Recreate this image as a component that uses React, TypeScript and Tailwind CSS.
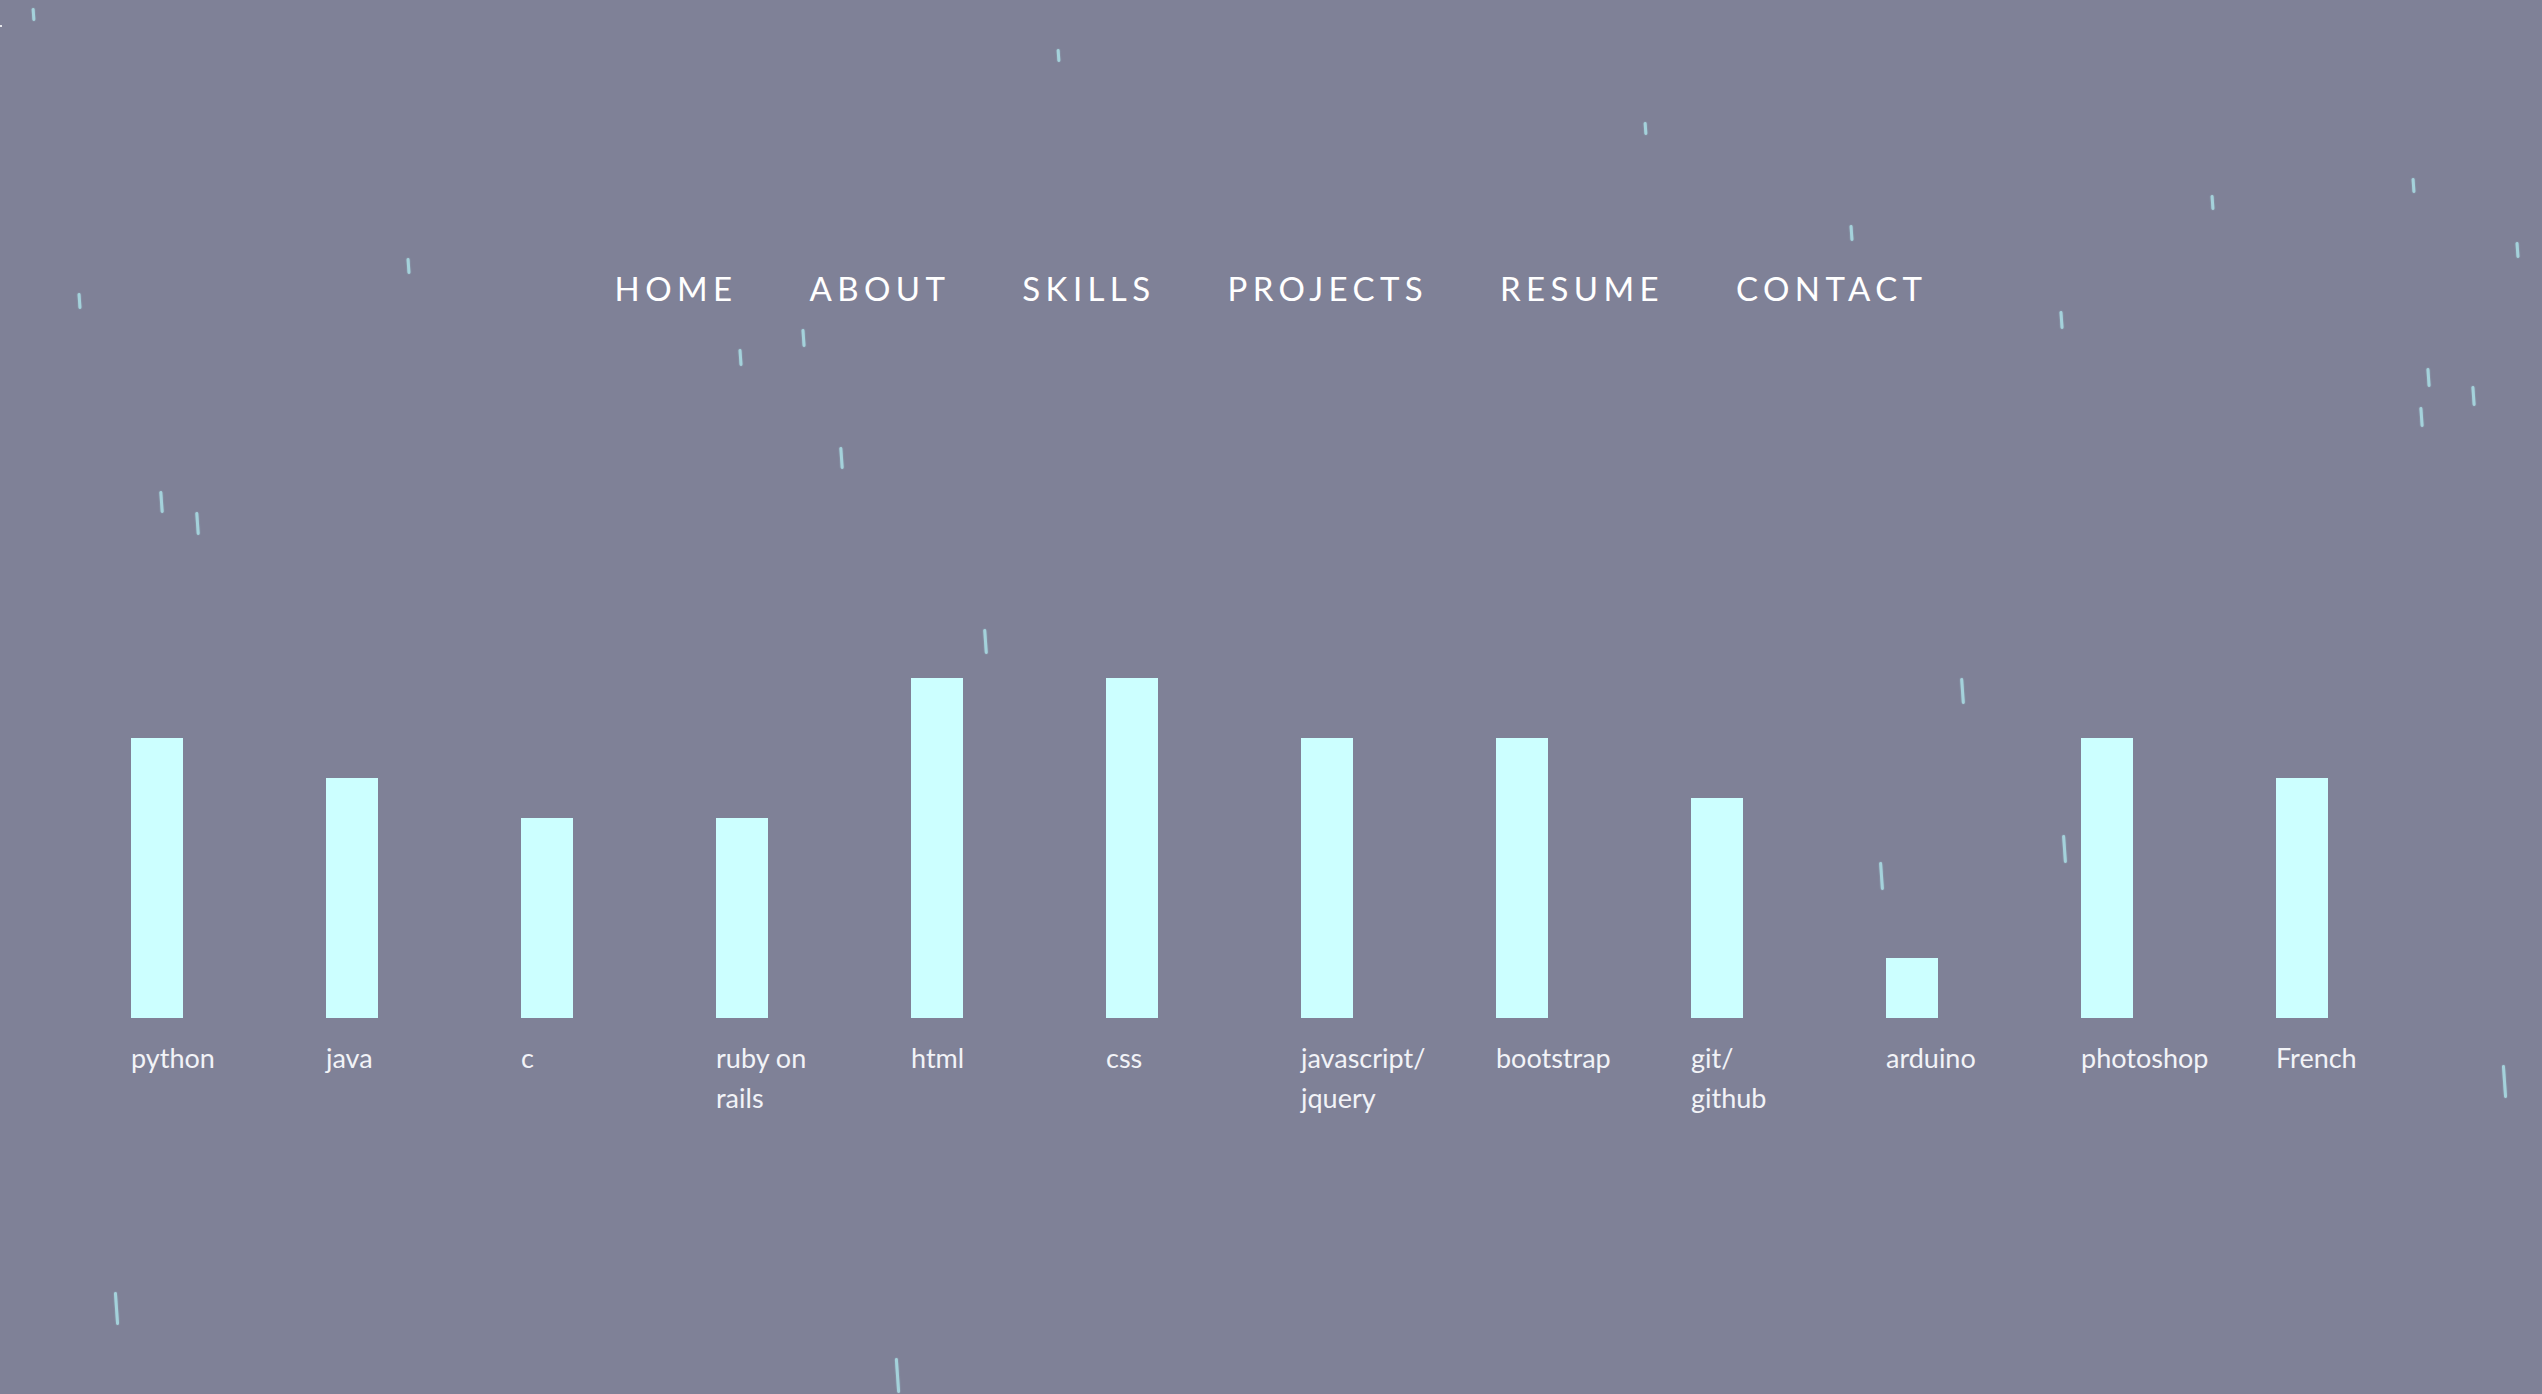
import React from "react";

const navItems = ["Home", "About", "Skills", "Projects", "Resume", "Contact"];

// bar heights in px, bottom aligned
const skills = [
  { name: "python", level: 280 },
  { name: "java", level: 240 },
  { name: "c", level: 200 },
  { name: "ruby on rails", level: 200 },
  { name: "html", level: 340 },
  { name: "css", level: 340 },
  { name: "javascript/\njquery", level: 280 },
  { name: "bootstrap", level: 280 },
  { name: "git/\ngithub", level: 220 },
  { name: "arduino", level: 60 },
  { name: "photoshop", level: 280 },
  { name: "French", level: 240 },
];

// falling rain streaks: x, y, length
const drops = [
  [32, 8, 13],
  [1057, 49, 13],
  [1644, 122, 13],
  [1850, 225, 16],
  [2211, 195, 15],
  [2412, 178, 15],
  [2516, 242, 16],
  [407, 258, 16],
  [78, 293, 16],
  [739, 349, 17],
  [802, 329, 18],
  [2060, 311, 18],
  [2427, 368, 19],
  [2472, 386, 20],
  [2420, 407, 20],
  [840, 447, 22],
  [160, 491, 22],
  [196, 512, 23],
  [984, 629, 25],
  [1961, 678, 26],
  [1880, 862, 28],
  [2063, 835, 28],
  [2503, 1065, 33],
  [115, 1292, 33],
  [896, 1358, 35],
];

function Rain() {
  return (
    <div className="pointer-events-none absolute inset-0 overflow-hidden">
      <span className="absolute left-0 top-[25px] h-[2px] w-[2px] bg-white/80" />
      {drops.map(([x, y, len], i) => (
        <span
          key={i}
          className="absolute w-[2.5px] -rotate-[4deg] rounded-full bg-[#a9dbe3] opacity-90 shadow-[0_0_2px_rgba(169,219,227,0.6)]"
          style={{ left: x, top: y, height: len }}
        />
      ))}
    </div>
  );
}

export default function App() {
  return (
    <div
      className="relative min-h-screen overflow-hidden bg-[#7f8197]"
      style={{ fontFamily: "Lato, 'Open Sans', sans-serif" }}
    >
      <Rain />

      <nav className="relative flex justify-center pt-[268px]">
        <ul className="flex gap-[72px]">
          {navItems.map((item) => (
            <li
              key={item}
              className="text-[33px] leading-[40px] uppercase tracking-[5.4px] text-white"
            >
              {item}
            </li>
          ))}
        </ul>
      </nav>

      <div className="relative mt-[370px] flex items-start pl-[131px]">
        {skills.map((s) => (
          <div key={s.name} className="flex w-[195px] flex-col">
            <div className="flex h-[340px] items-end">
              <div className="w-[52px] bg-[#ccffff]" style={{ height: s.level }} />
            </div>
            <p className="mt-[20px] w-[140px] whitespace-pre-line text-[27px] leading-[40px] text-[#f2f3f7]">
              {s.name}
            </p>
          </div>
        ))}
      </div>
    </div>
  );
}
